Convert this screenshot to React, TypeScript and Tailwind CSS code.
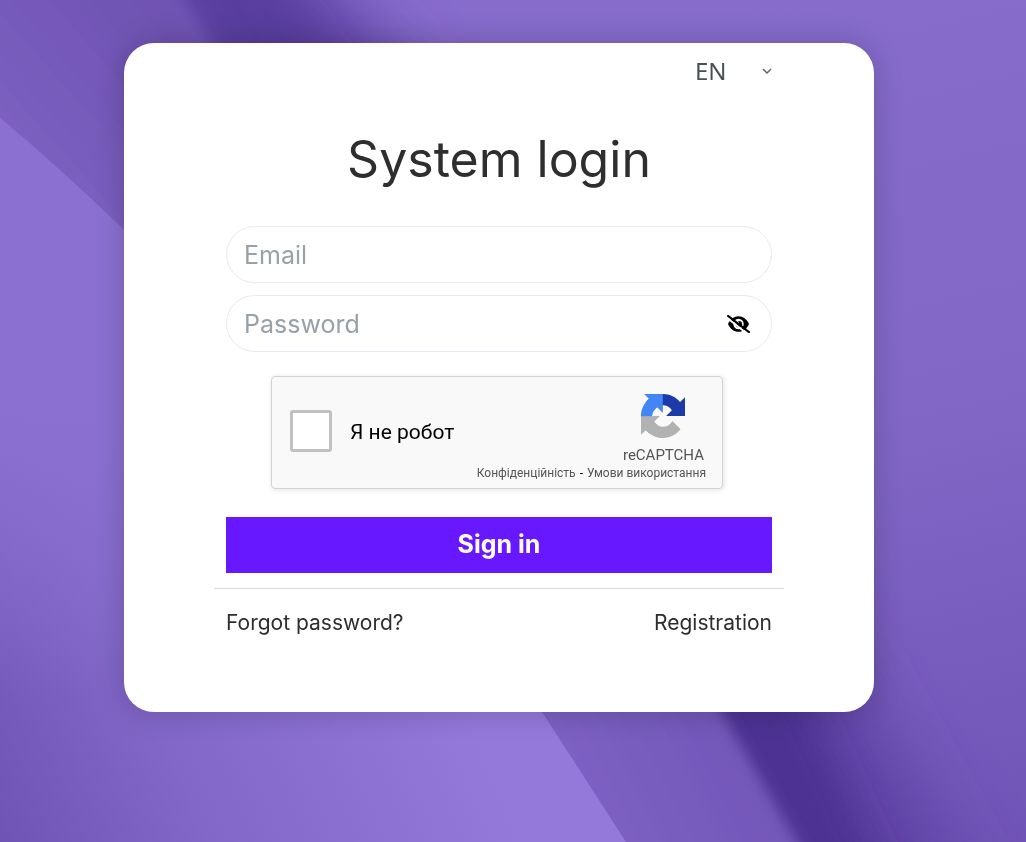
import { useState } from "react";

function Backdrop() {
  return (
    <svg
      className="fixed inset-0 h-full w-full"
      viewBox="0 0 1026 842"
      preserveAspectRatio="xMidYMid slice"
      aria-hidden="true"
    >
      <defs>
        <linearGradient id="base" x1="0.7" y1="0" x2="1" y2="1">
          <stop offset="0" stopColor="#876ccc" />
          <stop offset="0.5" stopColor="#8267c7" />
          <stop offset="1" stopColor="#7054b6" />
        </linearGradient>
        <linearGradient id="band" x1="0" y1="0" x2="0" y2="1">
          <stop offset="0" stopColor="#5b3fa0" />
          <stop offset="0.6" stopColor="#4d3193" />
          <stop offset="1" stopColor="#4d3193" />
        </linearGradient>
        <linearGradient id="fold" gradientUnits="userSpaceOnUse" x1="40" y1="160" x2="220" y2="0">
          <stop offset="0" stopColor="#7b5fc0" />
          <stop offset="1" stopColor="#6b4fae" />
        </linearGradient>
        <linearGradient id="foldLow" gradientUnits="userSpaceOnUse" x1="580" y1="780" x2="740" y2="700">
          <stop offset="0" stopColor="#7c60c2" />
          <stop offset="1" stopColor="#7256b7" />
        </linearGradient>
        <linearGradient id="sheet" gradientUnits="userSpaceOnUse" x1="0" y1="842" x2="440" y2="650">
          <stop offset="0" stopColor="#6f54b5" />
          <stop offset="0.4" stopColor="#8267c8" />
          <stop offset="1" stopColor="#9478da" />
        </linearGradient>
        <linearGradient id="sheetTop" x1="0" y1="0" x2="0" y2="1">
          <stop offset="0" stopColor="#8b70d1" />
          <stop offset="0.5" stopColor="#8b70d1" />
          <stop offset="1" stopColor="#8b70d1" stopOpacity="0" />
        </linearGradient>
        <filter id="soft" x="-30%" y="-30%" width="160%" height="160%">
          <feGaussianBlur stdDeviation="8" />
        </filter>
        <filter id="medium" x="-30%" y="-30%" width="160%" height="160%">
          <feGaussianBlur stdDeviation="18" />
        </filter>
        <filter id="wide" x="-50%" y="-50%" width="200%" height="200%">
          <feGaussianBlur stdDeviation="34" />
        </filter>
      </defs>
      <rect width="1026" height="842" fill="url(#base)" />
      <path d="M150 -80 L290 -60 L700 400 L1000 940 L760 940 Z" fill="#5f43a4" filter="url(#wide)" />
      <path d="M140 -60 L245 -60 L330 60 L800 690 L905 920 L700 920 L600 660 Z" fill="url(#band)" filter="url(#medium)" />
      <path d="M-60 -60 H130 L215 60 L690 660 L830 900 H-60 Z" fill="url(#fold)" filter="url(#soft)" />
      <path d="M500 650 H680 L712 712 L790 850 L818 900 H600 Z" fill="url(#foldLow)" filter="url(#soft)" />
      <path d="M0 118 Q62 170 124 230 Q370 450 542 712 L626 842 H0 Z" fill="url(#sheet)" />
      <path d="M0 118 Q62 170 124 230 L400 500 V700 H0 Z" fill="url(#sheetTop)" />
    </svg>
  );
}

function EyeIcon({ slashed }: { slashed: boolean }) {
  return (
    <svg className="h-[18px] w-[23px]" viewBox="0 0 23 18" aria-hidden="true">
      <path d="M1 9C3.2 4 7 1.200 11.500 1.200S19.800 4 22 9c-2.200 5-6 7.800-10.500 7.800S3.200 14 1 9Z" fill="#000" />
      <circle cx="11.500" cy="9" r="5.200" fill="#fff" />
      <circle cx="11.800" cy="9.200" r="3.300" fill="#000" />
      <circle cx="10.300" cy="7.300" r="1.500" fill="#fff" />
      {slashed && (
        <>
          <path d="M0 2.800L20.500 19" stroke="#fff" strokeWidth="2" />
          <path d="M1 .9L22 17.100" stroke="#000" strokeWidth="2" strokeLinecap="round" />
        </>
      )}
    </svg>
  );
}

function RecaptchaLogo() {
  return (
    <svg className="h-11 w-11" viewBox="0 0 64 64" aria-hidden="true">
      <path
        fill="#1c3aa9"
        d="M64 31.955c-.001-.46-.012-.918-.033-1.373V4.631l-7.174 7.174C50.922 4.618 42.003.027 32.013.027c-10.397 0-19.633 4.971-25.477 12.67L18.295 24.58a15.59 15.59 0 0 1 4.763-5.345c2.054-1.603 4.964-2.913 8.954-2.913.482 0 .854.056 1.127.162 4.944.39 9.229 3.118 11.752 7.078l-8.324 8.324L64 31.823"
      />
      <path
        fill="#4285f4"
        d="M31.862.028c-.46.001-.918.012-1.373.033H4.538l7.174 7.174C4.525 13.106-.066 22.025-.066 32.015c0 10.397 4.971 19.633 12.67 25.477l11.883-11.759a15.59 15.59 0 0 1-5.345-4.763c-1.603-2.054-2.913-4.964-2.913-8.954 0-.482.056-.854.162-1.127.39-4.944 3.118-9.229 7.078-11.752l8.324 8.324L31.73.028"
      />
      <path
        fill="#b2b2b2"
        d="M.028 32.075c.001.46.012.918.033 1.373v25.951l7.174-7.174c5.871 7.187 14.79 11.778 24.78 11.778 10.397 0 19.633-4.971 25.477-12.67L45.733 39.45a15.59 15.59 0 0 1-4.763 5.345c-2.054 1.603-4.964 2.913-8.954 2.913-.482 0-.854-.056-1.127-.162-4.944-.39-9.229-3.118-11.752-7.078l8.324-8.324L.028 32.207"
      />
    </svg>
  );
}

function Recaptcha() {
  return (
    <div className="mx-auto flex h-[113px] w-full max-w-[452px] rounded-[4px] border border-[#d3d3d3] bg-[#f9f9f9] font-['Roboto',sans-serif] shadow-[1px_1px_4px_1px_rgba(0,0,0,0.08)]">
      <label className="flex flex-none items-center gap-[18px] pb-1 pl-[18px] text-[21px] text-black">
        <input
          type="checkbox"
          className="h-[42px] w-[42px] appearance-none rounded-[3px] border-3 border-[#c1c1c1] bg-white"
        />
        <span className="pt-1">Я не робот</span>
      </label>
      <div className="flex flex-1 flex-col items-end pt-[17px] pr-4 text-[#555]">
        <div className="flex flex-col items-center pr-[2px]">
          <RecaptchaLogo />
          <span className="mt-[7px] text-[15px] leading-5">reCAPTCHA</span>
        </div>
        <div className="flex gap-1 text-xs leading-4 whitespace-nowrap">
          <a href="#privacy">Конфіденційність</a>
          <span className="text-black">-</span>
          <a href="#terms">Умови використання</a>
        </div>
      </div>
    </div>
  );
}

const fieldClass =
  "h-[57px] w-full rounded-full border border-[#e8e8f3] bg-white pl-[17px] pr-14 text-[25px] text-[#2e2e2e] placeholder:text-[#98a0a8] outline-none";

export default function App() {
  const [visible, setVisible] = useState(false);

  return (
    <div className="min-h-screen bg-[#8267c7] font-['Inter',sans-serif] text-[#2e2e2e]">
      <Backdrop />
      <main className="relative pt-[43px] pr-[152px] pb-16 pl-[124px]">
        <section className="w-full rounded-[30px] bg-white px-[90px] pt-[10px] pb-[74px] shadow-[0_0_30px_rgba(0,0,0,0.2)]">
          <form className="px-3" onSubmit={(e) => e.preventDefault()}>
            <div className="flex justify-end">
              <div className="relative">
                <select
                  aria-label="Language"
                  className="h-9 w-[77px] appearance-none bg-transparent text-2xl leading-9 text-[#495057] [font-family:'Noto_Sans',sans-serif]"
                >
                  <option>EN</option>
                  <option>UA</option>
                </select>
                <svg
                  className="pointer-events-none absolute top-[15px] right-0 h-[6px] w-[10px]"
                  viewBox="0 0 10 6"
                  fill="none"
                  stroke="#666"
                  strokeWidth="1.5"
                  aria-hidden="true"
                >
                  <path d="M1 1l4 4 4-4" />
                </svg>
              </div>
            </div>

            <h1 className="mt-10 text-center text-[50px] leading-[60px]">System login</h1>

            <div className="mt-[37px] flex flex-col gap-3">
              <input type="email" aria-label="Email" placeholder="Email" className={fieldClass} />
              <div className="relative">
                <input
                  type={visible ? "text" : "password"}
                  aria-label="Password"
                  placeholder="Password"
                  className={fieldClass}
                />
                <button
                  type="button"
                  aria-label="Show password"
                  onClick={() => setVisible(!visible)}
                  className="absolute inset-y-0 right-[22px] flex items-center"
                >
                  <EyeIcon slashed={!visible} />
                </button>
              </div>
            </div>

            <div className="mt-6 pr-1">
              <Recaptcha />
            </div>

            <button type="submit" className="mt-7 h-14 w-full bg-[#6818ff] text-[25px] font-bold text-white">
              Sign in
            </button>
          </form>

          <hr className="mt-[15px] border-[#dcdcdc]" />

          <div className="mt-[19px] flex justify-between px-3 text-[21px] leading-[30px]">
            <a href="#forgot">Forgot password?</a>
            <a href="#registration">Registration</a>
          </div>
        </section>
      </main>
    </div>
  );
}
